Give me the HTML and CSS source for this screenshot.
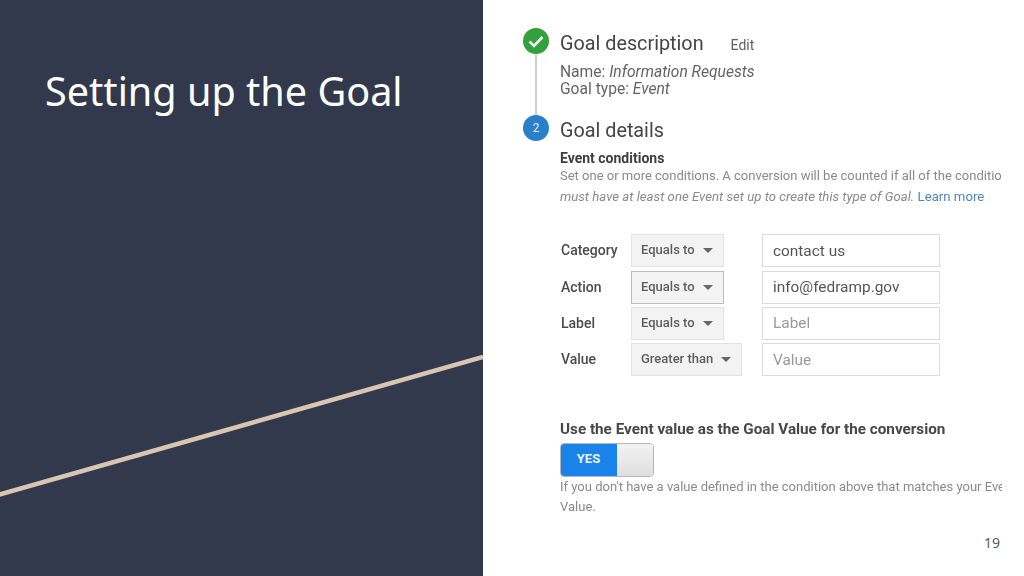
FILE: index.html
```html
<!DOCTYPE html>
<html lang="en">
<head>
    <meta charset="UTF-8">
    <title>Setting up the Goal</title>
    <link rel="stylesheet" href="styles.css">
</head>
<body>
    <div class="slide">
        <div class="side">
            <h1 class="title">Setting up the Goal</h1>
            <svg class="rule" width="483" height="576" viewBox="0 0 483 576">
                <line x1="-2" y1="495" x2="483" y2="357" stroke="#d9c5b2" stroke-width="4.5"/>
            </svg>
        </div>
        <div class="main">
            <div class="shot">
                <div class="step step-first">
                    <div class="marker">
                        <div class="circle circle-green">
                            <svg width="26" height="26" viewBox="0 0 26 26">
                                <path d="M6.5 13.5l4.5 4.5 8.5-9" fill="none" stroke="#f4f8f4" stroke-width="2.6"/>
                            </svg>
                        </div>
                        <div class="connector"></div>
                    </div>
                    <div class="step-body">
                        <div class="step-head">
                            <span class="step-title">Goal description</span>
                            <span class="edit">Edit</span>
                        </div>
                        <div class="summary">Name: <i>Information Requests</i></div>
                        <div class="summary">Goal type: <i>Event</i></div>
                    </div>
                </div>
                <div class="step">
                    <div class="marker">
                        <div class="circle circle-blue">2</div>
                    </div>
                    <div class="step-body">
                        <div class="step-head">
                            <span class="step-title">Goal details</span>
                        </div>
                        <div class="sub-title">Event conditions</div>
                        <div class="help nowrap">Set one or more conditions. A conversion will be counted if all of the conditions are true</div>
                        <div class="help help-wide nowrap"><i>must have at least one Event set up to create this type of Goal.</i> <a class="learn" href="#">Learn more</a></div>

                        <div class="conditions">
                            <div class="cond-label">Category</div>
                            <div class="select">Equals to <span class="caret"></span></div>
                            <div class="input">contact us</div>

                            <div class="cond-label">Action</div>
                            <div class="select select-active">Equals to <span class="caret"></span></div>
                            <div class="input">info@fedramp.gov</div>

                            <div class="cond-label">Label</div>
                            <div class="select">Equals to <span class="caret"></span></div>
                            <div class="input input-empty">Label</div>

                            <div class="cond-label">Value</div>
                            <div class="select">Greater than <span class="caret"></span></div>
                            <div class="input input-empty">Value</div>
                        </div>

                        <div class="use-title">Use the Event value as the Goal Value for the conversion</div>
                        <div class="toggle">
                            <div class="toggle-on">YES</div>
                            <div class="toggle-off"></div>
                        </div>
                        <div class="help nowrap">If you don't have a value defined in the condition above that matches your Event</div>
                        <div class="help">Value.</div>
                    </div>
                </div>
            </div>
            <div class="page-num">19</div>
        </div>
    </div>
</body>
</html>
```

FILE: styles.css
```css
html, body {
    margin: 0;
    padding: 0;
}
body {
    width: 1024px;
    height: 576px;
    overflow: hidden;
    background-color: #ffffff;
}
.slide {
    display: flex;
    width: 1024px;
    height: 576px;
}
.side {
    position: relative;
    width: 483px;
    height: 576px;
    background-color: #33394d;
    flex-shrink: 0;
}
.title {
    margin: 0;
    padding: 63px 0 0 45px;
    font-family: "Noto Sans", sans-serif;
    font-size: 39.6px;
    line-height: 56px;
    font-weight: 400;
    color: #ffffff;
}
.rule {
    position: absolute;
    left: 0;
    top: 0;
}
.main {
    position: relative;
    flex: 1;
}
.shot {
    width: 479px;
    margin-left: 40px;
    padding-top: 28px;
    overflow: hidden;
    font-family: Roboto, sans-serif;
    color: #4a4a4a;
    filter: blur(0.4px);
}
.nowrap {
    white-space: nowrap;
}
.step {
    display: flex;
}
.step-first {
    height: 87px;
}
.marker {
    width: 37px;
    flex-shrink: 0;
    display: flex;
    flex-direction: column;
    align-items: flex-start;
}
.circle {
    width: 26px;
    height: 26px;
    border-radius: 50%;
    display: flex;
    align-items: center;
    justify-content: center;
    flex-shrink: 0;
}
.circle-green {
    background-color: #34a03c;
}
.circle-blue {
    background-color: #2a7fcb;
    color: #e8f1fa;
    font-size: 12px;
}
.connector {
    width: 1.5px;
    flex: 1;
    margin-left: 12px;
    background-color: #cfcfcf;
}
.step-body {
    flex: 1;
    min-width: 0;
}
.step-head {
    height: 26px;
    padding-top: 2px;
    display: flex;
    align-items: center;
}
.step-title {
    font-size: 19.8px;
    color: #454545;
}
.edit {
    margin-left: 27px;
    margin-top: 3px;
    font-size: 14px;
    color: #5f5f5f;
}
.summary {
    font-size: 15.6px;
    line-height: 17px;
    color: #636363;
}
.step-head + .summary {
    margin-top: 8px;
}
.sub-title {
    margin-top: 7px;
    margin-bottom: -1px;
    font-size: 14px;
    line-height: 17px;
    font-weight: 700;
    color: #3e3e3e;
}
.help {
    font-size: 13px;
    line-height: 20.5px;
    color: #8a8a8a;
}
.help-wide {
    font-size: 13.2px;
}
.learn {
    color: #4a86c5;
    text-decoration: none;
}
.conditions {
    display: grid;
    grid-template-columns: 71px 131px 178px;
    grid-auto-rows: 33.4px;
    row-gap: 3px;
    margin-top: 27px;
    align-items: center;
}
.cond-label {
    padding-left: 1px;
    padding-bottom: 1px;
    font-size: 14px;
    font-weight: 500;
    color: #4b4b4b;
}
.select {
    justify-self: start;
    box-sizing: border-box;
    height: 33px;
    padding: 0 10px 2px 9px;
    display: flex;
    align-items: center;
    background-color: #f3f3f3;
    border: 1px solid #e2e2e2;
    font-size: 13px;
    font-weight: 500;
    color: #5e5e5e;
}
.select-active {
    border-color: #bdbdbd;
}
.caret {
    width: 0;
    height: 0;
    margin-left: 8px;
    margin-top: 2px;
    border-left: 5px solid transparent;
    border-right: 5px solid transparent;
    border-top: 5px solid #666666;
}
.input {
    box-sizing: border-box;
    height: 33px;
    padding-left: 10px;
    display: flex;
    align-items: center;
    background-color: #ffffff;
    border: 1px solid #dcdcdc;
    font-size: 15.4px;
    color: #555555;
}
.input-empty {
    color: #9a9a9a;
}
.use-title {
    margin-top: 43px;
    font-size: 15.25px;
    line-height: 18px;
    font-weight: 700;
    color: #474747;
}
.toggle {
    display: flex;
    box-sizing: border-box;
    width: 94px;
    height: 34px;
    margin-top: 5px;
    border-radius: 4px;
    overflow: hidden;
    border: 1px solid #b5b5b5;
}
.toggle-on {
    width: 57px;
    margin: -1px 0 -1px -1px;
    display: flex;
    align-items: center;
    justify-content: center;
    padding-bottom: 2px;
    background-color: #1a83ea;
    color: #e9f3fd;
    font-size: 13px;
    font-weight: 700;
}
.toggle-off {
    flex: 1;
    background: linear-gradient(#f2f2f2, #dedede);
}
.page-num {
    position: absolute;
    right: 24px;
    top: 534px;
    font-family: "Noto Sans", sans-serif;
    font-size: 14px;
    line-height: 18px;
    color: #595959;
}
```
